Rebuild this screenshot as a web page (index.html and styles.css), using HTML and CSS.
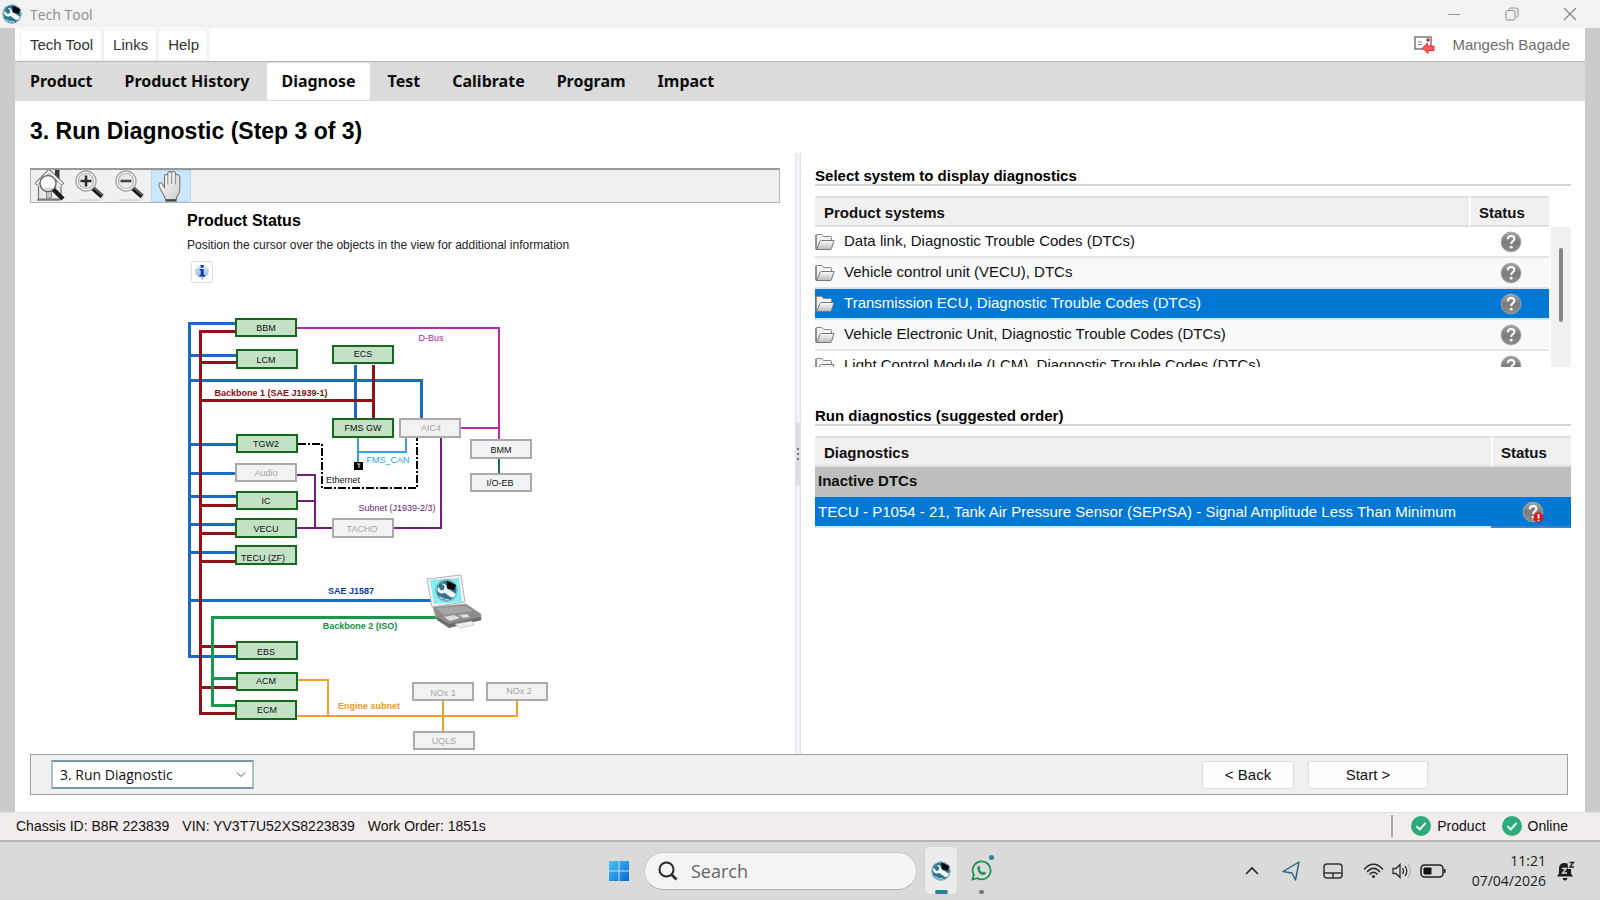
FILE: index.html
```html
<!DOCTYPE html>
<html lang="en">
<head>
<meta charset="utf-8">
<title>Tech Tool</title>
<link rel="stylesheet" href="styles.css">
</head>
<body>
<svg class="defs" aria-hidden="true">
  <defs>
    <linearGradient id="folderFill" x1="0" y1="0" x2="0" y2="1"><stop offset="0" stop-color="#fdfdfd"/><stop offset="1" stop-color="#b9b9b9"/></linearGradient>
    <linearGradient id="ballFill" x1="0" y1="0" x2="0" y2="1"><stop offset="0" stop-color="#a4a4a4"/><stop offset=".5" stop-color="#7b7b7b"/><stop offset="1" stop-color="#8d8d8d"/></linearGradient>
    <linearGradient id="gloveFill" x1="0" y1="0" x2="1" y2="1"><stop offset="0" stop-color="#ffffff"/><stop offset="1" stop-color="#cfcfcf"/></linearGradient>
    <linearGradient id="winFill" x1="0" y1="0" x2="1" y2="1"><stop offset="0" stop-color="#4cc4fa"/><stop offset="1" stop-color="#0468d2"/></linearGradient>
    <linearGradient id="infoFill" x1="0" y1="0" x2="0" y2="1"><stop offset="0" stop-color="#eef4fc"/><stop offset="1" stop-color="#7fa3d6"/></linearGradient>
    <symbol id="folder" viewBox="0 0 20 18">
      <path d="M1 16V2.500Q1 1.500 2 1.500H7L8.500 3.500H15.500Q16.500 3.500 16.500 4.500V7" fill="#f1f1f1" stroke="#8a8a8a"/>
      <path d="M1.500 16.500L5 8.500Q5.300 7.500 6.500 7.500H19L16.500 15.500Q16.200 16.500 15 16.500Z" fill="url(#folderFill)" stroke="#777"/>
      <path d="M1 2v14.500" stroke="#666"/>
    </symbol>
    <symbol id="unknown" viewBox="0 0 22 22">
      <circle cx="11" cy="11" r="10" fill="url(#ballFill)" stroke="#a9a9a9" stroke-width=".8"/>
      <path d="M7.800 8.200Q8 5 11.200 5Q14.400 5 14.400 7.800Q14.400 9.400 12.600 10.400Q11.200 11.300 11.200 13" fill="none" stroke="#fff" stroke-width="2"/>
      <circle cx="11.200" cy="16.200" r="1.400" fill="#fff"/>
    </symbol>
    <symbol id="logo" viewBox="0 0 20 20">
      <circle cx="10" cy="10" r="9.500" fill="#2a7590"/>
      <circle cx="10" cy="10" r="9" fill="none" stroke="#8fb9c6"/>
      <path d="M10.500 9.500V1.500L18.500 5.200L16.500 9.800L13 8.500Z" fill="#050505"/>
      <path d="M3 6.500L5 9.800L7.600 9.600L8.400 6.400L5.500 4Q10 3.500 10.600 8.300L18 12.800L17 15.500L14 16L8.400 12Q4 13.800 1.800 9.500Z" fill="#f4fafc"/>
      <path d="M4 15.500Q8 18.500 12 17.600" stroke="#bcd8e0" fill="none"/>
    </symbol>
    <symbol id="lens" viewBox="0 0 32 32">
      <ellipse cx="14" cy="30" rx="12" ry="1.500" fill="#dcdcdc"/>
      <path d="M17.500 18L27 26.500" stroke="#1c1c1c" stroke-width="4.500"/>
      <path d="M19 18L27 25" stroke="#999" stroke-width="1"/>
      <circle cx="11" cy="11" r="10" fill="#fafafa" stroke="#a6a6a6" stroke-width="1.400"/>
      <circle cx="11" cy="11" r="7.500" fill="#ebebeb" stroke="#b3b3b3" stroke-width="1.200"/>
    </symbol>
    <symbol id="check" viewBox="0 0 20 20">
      <circle cx="10" cy="10" r="10" fill="#2faa7b"/>
      <path d="M5.500 10.300L8.800 13.400L14.600 7" fill="none" stroke="#f1fff9" stroke-width="2"/>
    </symbol>
  </defs>
</svg>

<header class="titlebar">
  <svg class="app-logo"><use href="#logo"/></svg>
  <span class="app-name">Tech Tool</span>
  <div class="window-controls">
    <button type="button" aria-label="Minimize"><svg width="14" height="14"><path d="M1 7.500H13" stroke="#9a9a9a"/></svg></button>
    <button type="button" aria-label="Restore"><svg width="14" height="14" fill="none" stroke="#8a8a8a"><rect x="1" y="3.500" width="9" height="9.500" rx="1.500"/><path d="M4 3V2.500Q4 1 5.500 1H10.500Q13 1 13 3.500V8.500Q13 10 11.500 10.500"/></svg></button>
    <button type="button" aria-label="Close"><svg width="14" height="14"><path d="M1 1L13 13M13 1L1 13" stroke="#858585" stroke-width="1.200"/></svg></button>
  </div>
</header>

<div class="frame">
  <div class="app">
    <div class="menubar">
      <nav class="menus">
        <button type="button">Tech Tool</button>
        <button type="button">Links</button>
        <button type="button">Help</button>
      </nav>
      <div class="user">
        <svg width="21" height="18" viewBox="0 0 21 18"><rect x="1" y="1" width="16" height="12" fill="#fff" stroke="#808080" stroke-width="1.600"/><path d="M4 6H8M4 8.500H8" stroke="#888"/><circle cx="14" cy="4" r="1.700" fill="#a33"/><path d="M8.500 12L13.500 7V10H20V14.500H14V17.500Z" fill="#ff5a5a" stroke="#d92b34"/></svg>
        <span>Mangesh Bagade</span>
      </div>
    </div>
    <nav class="tabs">
      <a href="#product">Product</a>
      <a href="#history">Product History</a>
      <a href="#diagnose" class="active">Diagnose</a>
      <a href="#test">Test</a>
      <a href="#calibrate">Calibrate</a>
      <a href="#program">Program</a>
      <a href="#impact">Impact</a>
    </nav>
    <h1>3. Run Diagnostic (Step 3 of 3)</h1>

    <main class="panes">
      <section class="view-pane">
        <div class="toolbar">
          <button type="button" aria-label="Fit view">
            <svg width="32" height="32" viewBox="0 0 32 32">
              <path d="M20 0H24.500V12H20Z" fill="#3a3a3a"/>
              <path d="M3.500 15L14 4L25 15V29H3.500Z" fill="#e9e9e9"/>
              <path d="M3.500 16V29H26V16" fill="none" stroke="#777" stroke-width="1.200"/>
              <path d="M.8 14.500L14 1L28 14.500" fill="none" stroke="#6b6b6b" stroke-width="3.600"/>
              <path d="M1.500 14L14 1.500L27.300 14" fill="none" stroke="#fff" stroke-width="2"/>
              <rect x="11.500" y="19" width="5" height="9" fill="#c9c9c9" stroke="#8a8a8a"/>
              <circle cx="13" cy="13.500" r="8" fill="#fff" stroke="#666" stroke-width="1.400"/>
              <path d="M10 21V18.500H16.500V20.500" fill="none" stroke="#bbb"/>
              <path d="M18.500 19.500L28 29" stroke="#1b1b1b" stroke-width="4.500"/>
              <path d="M2 30H25" stroke="#444"/>
            </svg>
          </button>
          <button type="button" aria-label="Zoom in">
            <svg width="32" height="32" viewBox="0 0 32 32"><use href="#lens"/><path d="M11 5.500V16.500M5.500 11H16.500" stroke="#2b2b2b" stroke-width="2.600"/></svg>
          </button>
          <button type="button" aria-label="Zoom out">
            <svg width="32" height="32" viewBox="0 0 32 32"><use href="#lens"/><path d="M5.500 11H16.500" stroke="#444" stroke-width="2.600"/></svg>
          </button>
          <button type="button" class="pressed" aria-label="Pan">
            <svg width="32" height="32" viewBox="0 0 32 32">
              <path d="M10.500 29.500Q9.800 26 7.500 23Q5 19.500 4 15Q3.800 12.500 5.800 12.800Q7.600 13.300 8.600 16L9.500 17.500V6Q10.600 3.600 12.800 5V3Q14.500 .6 16.700 2.400Q18.800 .4 20.600 3V5Q23.400 3.600 24.800 6.500V20Q24.500 24 21.500 27V29.500Z" fill="url(#gloveFill)" stroke="#777" stroke-width="1.100"/>
              <path d="M12.800 5V14.500M16.700 2.500V14M20.600 5V14.500" stroke="#8a8a8a" fill="none"/>
              <path d="M9.500 18Q13 23 20 20.500" stroke="#e3e3e3" fill="none"/>
              <path d="M10.500 30.500H21.500" stroke="#444" stroke-width="2"/>
            </svg>
          </button>
        </div>
        <div class="status-view">
          <h2 class="view-title">Product Status</h2>
          <p class="view-hint">Position the cursor over the objects in the view for additional information</p>
          <button type="button" class="info" aria-label="Information">
            <svg width="16" height="16" viewBox="0 0 16 16"><path d="M8 .5A7 6.500 0 1 1 7.900 .5ZM6 13L8.500 16L10 13Z" fill="url(#infoFill)"/><rect x="6.500" y="1" width="3.200" height="2.600" fill="#123f9c"/><path d="M5.500 5H9.700V11H11V12.500H5.500V11H6.700V6.500H5.500Z" fill="#123f9c"/></svg>
          </button>
          <svg class="diagram" width="393" height="454" viewBox="7 0 393 454" role="img" aria-label="Vehicle network diagram">
            <g class="wire blue">
              <path d="M56 23H9V356H57M9 55H57M9 80H241V118M9 144H57M9 173H56M9 196H57M9 224H56M9 252H56M9 300H252M175 65V118"/>
            </g>
            <g class="wire red">
              <path d="M56 31H20V413H56M20 62H57M20 100H193M20 205H57M20 233H56M20 261H56M20 346H57M20 387H57M193 65V118"/>
            </g>
            <path class="wire green" d="M256 317H32V405H56M32 378H57"/>
            <path class="wire thin pink" d="M117 28H319V139M281 128H319"/>
            <path class="wire thin teal" d="M319 158V173"/>
            <path class="wire thin sky" d="M178 138V163M178 152H226V138"/>
            <path class="wire thin violet" d="M116 175H135V228M117 201H135M117 228H152M213 228H261V138"/>
            <path class="wire thin orange" d="M118 380H148V416M117 416H337V401M263 401V431"/>
            <path class="wire thin ether" d="M118 144H142V188H237V138"/>
            <rect x="174" y="162" width="9" height="8" fill="#000"/>
            <path d="M177 164H180.500M179 164V168" stroke="#ddd"/>
            <g class="node ok">
              <rect x="56" y="19" width="60" height="17"/><rect x="57" y="50" width="60" height="18"/>
              <rect x="153" y="46" width="60" height="17"/><rect x="153" y="119" width="60" height="18"/>
              <rect x="57" y="135" width="60" height="17"/><rect x="57" y="192" width="60" height="17"/>
              <rect x="56" y="219" width="60" height="18"/><rect x="56" y="246" width="60" height="18"/>
              <rect x="57" y="342" width="60" height="17"/><rect x="57" y="373" width="60" height="17"/>
              <rect x="56" y="401" width="60" height="18"/>
            </g>
            <g class="node off">
              <rect x="220" y="119" width="60" height="18"/><rect x="56" y="164" width="60" height="17"/>
              <rect x="153" y="219" width="60" height="18"/><rect x="291" y="140" width="60" height="18"/>
              <rect x="291" y="174" width="60" height="17"/><rect x="233" y="383" width="60" height="17"/>
              <rect x="307" y="383" width="60" height="17"/><rect x="234" y="432" width="60" height="17"/>
            </g>
            <g class="label">
              <text x="86" y="31">BBM</text><text x="86" y="63">LCM</text><text x="183" y="57">ECS</text>
              <text x="183" y="131">FMS GW</text><text x="86" y="147">TGW2</text><text x="86" y="204">IC</text>
              <text x="86" y="232">VECU</text><text x="83" y="261">TECU (ZF)</text><text x="86" y="355">EBS</text>
              <text x="86" y="384">ACM</text><text x="87" y="413">ECM</text><text x="321" y="153">BMM</text>
              <text x="320" y="186">I/O-EB</text><text x="163" y="183">Ethernet</text>
            </g>
            <g class="label muted">
              <text x="251" y="131">AIC4</text><text x="86" y="176">Audio</text><text x="182" y="232">TACHO</text>
              <text x="263" y="396">NOx 1</text><text x="339" y="394">NOx 2</text><text x="264" y="444">UQLS</text>
            </g>
            <g class="label">
              <text x="251" y="41" fill="#b01a96">D-Bus</text>
              <text x="208" y="163" fill="#2f9fe6">FMS_CAN</text>
              <text x="217" y="211" fill="#6a2077">Subnet (J1939-2/3)</text>
            </g>
            <g class="label strong">
              <text x="91" y="96" fill="#8b0a0f">Backbone 1 (SAE J1939-1)</text>
              <text x="171" y="294" fill="#0a35b5">SAE J1587</text>
              <text x="180" y="329" fill="#0f9240">Backbone 2 (ISO)</text>
              <text x="189" y="409" fill="#f0981c">Engine subnet</text>
            </g>
            <g>
              <path d="M247 279L281 275L285 302L252 307Z" fill="#f4f4f4" stroke="#b5b5b5"/>
              <path d="M250 280L279 278L282 302L254 304Z" fill="#86eef2"/>
              <path d="M253 307L286 304L301 314L301 320L269 327L256 318Z" fill="#8f8c8c" stroke="#aaa" stroke-width=".8"/>
              <path d="M256 316L269 324L301 317V320L269 328L257 320Z" fill="#6d6a6a"/>
              <path d="M256 308L285 306L293 311L264 315Z" fill="#a8a5a5"/>
              <path d="M264 317L274 315L280 318L270 321Z M279 315L287 314L290 317L283 318Z" fill="#dcdcdc"/>
              <path d="M275 324L292 321L294 325L280 328Z" fill="#eee" stroke="#b5b5b5" stroke-width=".6"/>
              <use href="#logo" x="255" y="279" width="23" height="23"/>
            </g>
          </svg>
        </div>
      </section>

      <div class="splitter"><span class="grip"><i></i><i></i><i></i></span></div>

      <section class="data-pane">
        <h2 class="section-title">Select system to display diagnostics</h2>
        <div class="list systems">
          <table>
            <thead><tr><th scope="col">Product systems</th><th scope="col" class="state">Status</th></tr></thead>
            <tbody>
              <tr><td><svg class="folder"><use href="#folder"/></svg>Data link, Diagnostic Trouble Codes (DTCs)</td><td class="state"><svg class="ball"><use href="#unknown"/></svg></td></tr>
              <tr class="alt"><td><svg class="folder"><use href="#folder"/></svg>Vehicle control unit (VECU), DTCs</td><td class="state"><svg class="ball"><use href="#unknown"/></svg></td></tr>
              <tr class="selected"><td><svg class="folder"><use href="#folder"/></svg>Transmission ECU, Diagnostic Trouble Codes (DTCs)</td><td class="state"><svg class="ball"><use href="#unknown"/></svg></td></tr>
              <tr class="alt"><td><svg class="folder"><use href="#folder"/></svg>Vehicle Electronic Unit, Diagnostic Trouble Codes (DTCs)</td><td class="state"><svg class="ball"><use href="#unknown"/></svg></td></tr>
              <tr><td><svg class="folder"><use href="#folder"/></svg>Light Control Module (LCM), Diagnostic Trouble Codes (DTCs)</td><td class="state"><svg class="ball"><use href="#unknown"/></svg></td></tr>
            </tbody>
          </table>
          <div class="scrollbar"><span class="thumb"></span></div>
        </div>

        <h2 class="section-title">Run diagnostics (suggested order)</h2>
        <div class="list">
          <table class="runs">
            <thead><tr><th scope="col">Diagnostics</th><th scope="col" class="state">Status</th></tr></thead>
            <tbody>
              <tr class="group"><th colspan="2" scope="rowgroup">Inactive DTCs</th></tr>
              <tr class="selected"><td>TECU - P1054 - 21, Tank Air Pressure Sensor (SEPrSA) - Signal Amplitude Less Than Minimum</td><td class="state"><svg class="ball" viewBox="0 0 22 22"><use href="#unknown"/><circle cx="16.500" cy="16.500" r="5" fill="#d8131c"/><path d="M16.500 13V17.500M16.500 18.800V20.300" stroke="#fff" stroke-width="1.800"/></svg></td></tr>
            </tbody>
          </table>
        </div>
      </section>
    </main>

    <div class="actions">
      <div class="step">
        <select aria-label="Step"><option>3. Run Diagnostic</option></select>
        <svg class="caret" width="10" height="6"><path d="M1 .5L5 4.500L9 .5" fill="none" stroke="#555"/></svg>
      </div>
      <div class="buttons">
        <button type="button" class="back">&lt; Back</button>
        <button type="button" class="start">Start &gt;</button>
      </div>
    </div>
  </div>
</div>

<footer class="statusbar">
  <span>Chassis ID: B8R 223839</span>
  <span>VIN: YV3T7U52XS8223839</span>
  <span>Work Order: 1851s</span>
  <div class="links">
    <span class="link"><svg width="20" height="20"><use href="#check"/></svg>Product</span>
    <span class="link"><svg width="20" height="20"><use href="#check"/></svg>Online</span>
  </div>
</footer>

<div class="taskbar">
  <div class="dock">
    <button type="button" aria-label="Start"><svg width="20" height="20" fill="url(#winFill)"><path d="M0 0H9.500V9.500H0ZM10.500 0H20V9.500H10.500ZM0 10.500H9.500V20H0ZM10.500 10.500H20V20H10.500Z"/></svg></button>
    <label class="search">
      <svg width="20" height="20" fill="none" stroke="#2b2b2b"><circle cx="8.500" cy="8.500" r="7" stroke-width="2"/><path d="M13.500 13.500L18.500 18.500" stroke-width="2.600"/></svg>
      <input type="text" placeholder="Search" aria-label="Search">
    </label>
    <button type="button" class="task current" aria-label="Tech Tool"><svg width="20" height="20"><use href="#logo"/></svg></button>
    <button type="button" class="task" aria-label="WhatsApp">
      <svg width="21" height="21" viewBox="0 0 21 21"><path d="M1.500 19.500L2.800 14.800A9 9 0 1 1 6.200 18.200Z" fill="none" stroke="#1f9355" stroke-width="1.800"/><path d="M6.800 6.200Q7.800 5.200 8.600 6.200L9.300 8Q9.300 8.800 8.600 9.400Q9.800 11.600 11.800 12.400L12.800 11.400L15 12.500Q15 14.800 12.600 15Q7 14.500 6.200 8.200Z" fill="#1f9355"/></svg>
      <span class="badge"></span>
    </button>
  </div>
  <div class="tray">
    <svg width="14" height="10" fill="none" stroke="#222" stroke-width="1.600"><path d="M1 8L7 2L13 8"/></svg>
    <svg width="18" height="20" fill="none" stroke="#27667a" stroke-width="1.400" stroke-linejoin="round"><path d="M17 1L1 10.500L10 12L13.500 19Z"/></svg>
    <svg width="20" height="16" fill="none" stroke="#333" stroke-width="1.500"><rect x="1" y="1" width="18" height="14" rx="3"/><path d="M1 10H19M10 10V15"/></svg>
    <span class="quick">
      <svg width="21" height="16" fill="none" stroke="#2b2b2b" stroke-width="1.400"><path d="M1 6.500Q10.500 -4 20 6.500M4 9Q10.500 1.500 17 9M6.500 11.500Q10.500 7 14.500 11.500"/><circle cx="10.500" cy="13.500" r="1.500" fill="#222" stroke="none"/></svg>
      <svg width="20" height="16" fill="none" stroke="#2b2b2b" stroke-width="1.300"><path d="M1 5.500H4L8 1.500V14.500L4 10.500H1ZM10.500 5Q12.500 8 10.500 11M13 3Q16.500 8 13 13"/><path d="M16 1Q21 8 16 15" stroke="#b5b5b5"/></svg>
      <svg width="26" height="14" fill="none" stroke="#222" stroke-width="1.500"><rect x="1" y="1" width="22" height="12" rx="3.500"/><rect x="3.500" y="3.500" width="8" height="7" rx="1" fill="#111" stroke="none"/><path d="M24.800 5V9"/></svg>
    </span>
    <time class="clock" datetime="2026-04-07T11:21">11:21<br>07/04/2026</time>
    <svg width="18" height="20" viewBox="0 0 18 20"><path d="M0 15.500L2 12.500V7Q2.500 2 7.500 2Q12 2 14 6V12.500L16 15.500Z" fill="#1c1c1c"/><path d="M5.500 17H10.500Q10 19.500 8 19.500Q6 19.500 5.500 17Z" fill="#1c1c1c"/><path d="M5 7.500H9.500L5.500 12H10" stroke="#ddd" stroke-width="1.300" fill="none"/><path d="M10.500 .5H18V8H11Z" fill="#dadada"/><path d="M12.500 1.500H16.500L12.800 6H17" stroke="#222" stroke-width="1.300" fill="none"/></svg>
  </div>
</div>
</body>
</html>
```
FILE: styles.css
```css
* { box-sizing: border-box; }

body {
  margin: 0;
  min-height: 100vh;
  display: flex;
  flex-direction: column;
  font-family: "Liberation Sans", Arial, sans-serif;
  font-size: 15px;
  color: #111;
  background: #fff;
}

button, select, input { font: inherit; color: inherit; }
button { cursor: pointer; }
svg { display: block; flex: none; }
h1, h2, p { margin: 0; }
.defs { position: absolute; width: 0; height: 0; }

.titlebar {
  display: flex;
  align-items: center;
  height: 28px;
  padding: 0 16px 0 2px;
  background: #f2f2f2;
}
.app-logo { width: 20px; height: 20px; }
.app-name {
  margin-left: 8px;
  font-family: "Open Sans", "Noto Sans", sans-serif;
  font-size: 14px;
  color: #8b8b8b;
}
.window-controls { display: flex; gap: 44px; margin-left: auto; padding-right: 7px; }
.window-controls button { padding: 0; border: 0; background: none; }

.frame {
  flex: 1;
  display: flex;
  padding: 0 15px;
  background: #cbcbcb;
}
.app {
  flex: 1;
  min-width: 0;
  display: flex;
  flex-direction: column;
  padding-bottom: 17px;
  background: #fff;
}

.menubar {
  display: flex;
  align-items: center;
  justify-content: space-between;
  height: 33px;
  padding: 0 15px 0 5px;
}
.menus { display: flex; }
.menus button {
  height: 32px;
  padding: 0 8px 0 9px;
  border: 1px solid #f0f0f0;
  border-width: 1px 2px 1px 1px;
  background: #fff;
  color: #333;
}
.user { display: flex; align-items: center; gap: 17px; color: #6d6d6d; }

.tabs {
  display: flex;
  gap: 4px;
  height: 40px;
  padding: 1px;
  border-top: 1px solid #b8b8b8;
  background: #dbdbdb;
}
.tabs a {
  padding: 0 14px;
  font-family: "Noto Sans", sans-serif;
  font-size: 16px;
  font-weight: 700;
  line-height: 37px;
  color: #0c0c0c;
  text-decoration: none;
}
.tabs .active { background: #fff; border-radius: 2px; }

h1 {
  padding: 17px 15px 9px;
  font-size: 23px;
  line-height: 26px;
  color: #000;
}

.panes {
  flex: 1;
  display: grid;
  grid-template-columns: 199fr 6px 200fr;
}

.view-pane { min-width: 0; padding: 15px 15px 0; }
.toolbar {
  display: flex;
  height: 35px;
  border: 1px solid #b4b4b4;
  border-top: 2px solid #999;
  background: #f0f0f0;
}
.toolbar button {
  display: flex;
  align-items: center;
  justify-content: center;
  width: 40px;
  padding: 0;
  border: 0;
  background: none;
}
.toolbar .pressed { background: #cce6fb; box-shadow: inset 0 0 0 1px #b3d9f5; }
.status-view { padding: 9px 0 0 157px; }
.view-title { font-size: 16px; line-height: 18px; color: #000; }
.view-hint { margin-top: 8px; font-size: 12px; line-height: 14px; color: #222; }
.info {
  display: flex;
  align-items: center;
  justify-content: center;
  width: 22px;
  height: 22px;
  margin: 9px 0 17px 4px;
  padding: 0;
  border: 1px solid #ddd;
  border-radius: 3px;
  background: #fff;
}

.diagram { font-size: 9px; }
.wire { fill: none; stroke-width: 3; shape-rendering: crispEdges; }
.thin { stroke-width: 2; }
.blue { stroke: #1b6ac6; }
.red { stroke: #8f1216; }
.green { stroke: #17984a; }
.pink { stroke: #c0289f; }
.teal { stroke: #17724c; }
.sky { stroke: #2fa5e4; }
.violet { stroke: #6f2078; }
.orange { stroke: #f2a02c; }
.ether { stroke: #000; stroke-dasharray: 8 2 2 2; }
.node rect { stroke-width: 2; }
.ok { fill: #c3e2c5; stroke: #16691c; }
.off { fill: #f2f2f5; stroke: #aaa; }
.label { text-anchor: middle; fill: #111; }
.muted { fill: #a5a5a5; }
.strong { font-weight: 700; }

.splitter {
  display: flex;
  flex-direction: column;
  justify-content: center;
  border: 1px solid #e0e0e6;
  border-width: 0 1px;
  background: #f0f0f6;
}
.grip {
  display: flex;
  flex-direction: column;
  align-items: center;
  justify-content: center;
  gap: 3px;
  height: 62px;
  background: #dedee4;
}
.grip i { width: 2px; height: 2px; background: #777; }

.data-pane { min-width: 0; padding: 14px 14px 0; }
.section-title {
  margin-bottom: 10px;
  border-bottom: 2px solid #d5d5d5;
  font-size: 15px;
  line-height: 17px;
  color: #000;
}
.list { display: flex; }
.systems {
  height: 171px;
  margin-bottom: 40px;
  overflow: hidden;
}
table {
  flex: 1;
  border-collapse: separate;
  border-spacing: 0;
  table-layout: fixed;
}
table.runs { width: 100%; }
thead th {
  height: 31px;
  padding: 2px 9px 0;
  border-top: 2px solid #e0e0e0;
  border-bottom: 2px solid #dedede;
  background: #f0f0f0;
  text-align: left;
  line-height: 17px;
}
th.state, td.state { width: 80px; }
thead .state { padding-left: 8px; border-left: 2px solid #fff; }
td {
  height: 31px;
  padding: 0;
  border-bottom: 2px solid #e4e4e4;
  white-space: nowrap;
  line-height: 17px;
}
td.state { padding-left: 4px; }
td .folder {
  float: left;
  width: 20px;
  height: 18px;
  margin: 1px 9px 0 0;
}
.ball { width: 22px; height: 22px; margin: 0 auto; }
.alt td { background: #f9f9f9; }
.selected td { background: #0078d4; border-bottom-color: #cfe6f8; color: #fff; }
.group th {
  height: 30px;
  padding: 0 3px 3px;
  background: #bebebe;
  text-align: left;
}
.runs .selected td:first-child { padding: 0 0 0 3px; }
.runs .selected .state { border-bottom-color: #3d86c6; }
.scrollbar {
  width: 20px;
  margin: 31px 0 0 2px;
  padding: 21px 8px 0;
  background: #f0f0f0;
}
.thumb { display: block; height: 74px; border-radius: 2px; background: #858585; }

.actions {
  display: flex;
  align-items: center;
  justify-content: space-between;
  height: 41px;
  margin: 0 17px 0 15px;
  padding: 0 139px 0 20px;
  border: 1px solid #a0a0a0;
  background: #f0f0f0;
}
.step { position: relative; }
.step select {
  width: 203px;
  height: 29px;
  padding: 0 7px;
  border: 2px solid #7b98a9;
  border-color: #7b98a9 #a9bfca;
  border-radius: 0;
  appearance: none;
  background: #fff;
  font-family: "Open Sans", "Noto Sans", sans-serif;
  font-size: 14px;
}
.caret { position: absolute; right: 8px; top: 12px; pointer-events: none; }
.buttons { display: flex; gap: 14px; }
.buttons button {
  height: 28px;
  padding: 0;
  border: 1px solid #dcdcdc;
  border-radius: 3px;
  background: #fdfdfd;
}
.back { width: 92px; }
.start { width: 120px; }

.statusbar {
  display: flex;
  align-items: center;
  gap: 13px;
  height: 30px;
  padding: 0 32px 2px 16px;
  border-top: 1px solid #e2dede;
  border-bottom: 2px solid #b5b4b4;
  background: #f0edec;
  font-size: 14px;
}
.links {
  display: flex;
  align-items: center;
  gap: 16px;
  height: 22px;
  margin-left: auto;
  padding-left: 18px;
  border-left: 2px solid #aaa;
}
.link { display: flex; align-items: center; gap: 6px; }

.taskbar {
  display: grid;
  grid-template-columns: 1fr auto 1fr;
  align-items: center;
  height: 59px;
  padding-bottom: 2px;
  background: #dadada;
  font-family: "Open Sans", "Noto Sans", sans-serif;
}
.dock { display: flex; align-items: center; grid-column: 2; padding-left: 6px; }
.dock button { padding: 0; border: 0; background: none; }
.search {
  display: flex;
  align-items: center;
  gap: 13px;
  width: 273px;
  height: 38px;
  margin: 0 8px 0 15px;
  padding: 0 13px;
  border: 1px solid #cacaca;
  border-bottom-color: #b0b0b0;
  border-radius: 19px;
  background: #f4f4f4;
}
.search input {
  flex: 1;
  min-width: 0;
  padding: 0;
  border: 0;
  outline: 0;
  background: none;
  font-size: 18px;
}
.search input::placeholder { color: #666; opacity: 1; }
.dock .task {
  position: relative;
  display: flex;
  align-items: center;
  justify-content: center;
  width: 32px;
  height: 47px;
  margin-right: 8px;
  border-radius: 4px;
}
.dock .task:last-child { margin: 0; }
.dock .current { background: #ececec; box-shadow: 0 0 1px #aaa; }
.task::after {
  content: "";
  position: absolute;
  bottom: 0;
  width: 5px;
  height: 4px;
  border-radius: 2px;
  background: #777;
}
.current::after { width: 13px; background: #2b8196; }
.badge {
  position: absolute;
  top: 8px;
  right: 3px;
  width: 5px;
  height: 5px;
  border-radius: 50%;
  background: #27849a;
}
.tray {
  display: flex;
  align-items: center;
  justify-content: flex-end;
  gap: 23px;
  padding-right: 25px;
}
.quick { display: flex; align-items: center; gap: 8px; margin: 0 6px 0 -3px; }
.clock {
  margin: 0 -12px 0 -3px;
  text-align: right;
  font-size: 14px;
  line-height: 20px;
  color: #222;
}
```
